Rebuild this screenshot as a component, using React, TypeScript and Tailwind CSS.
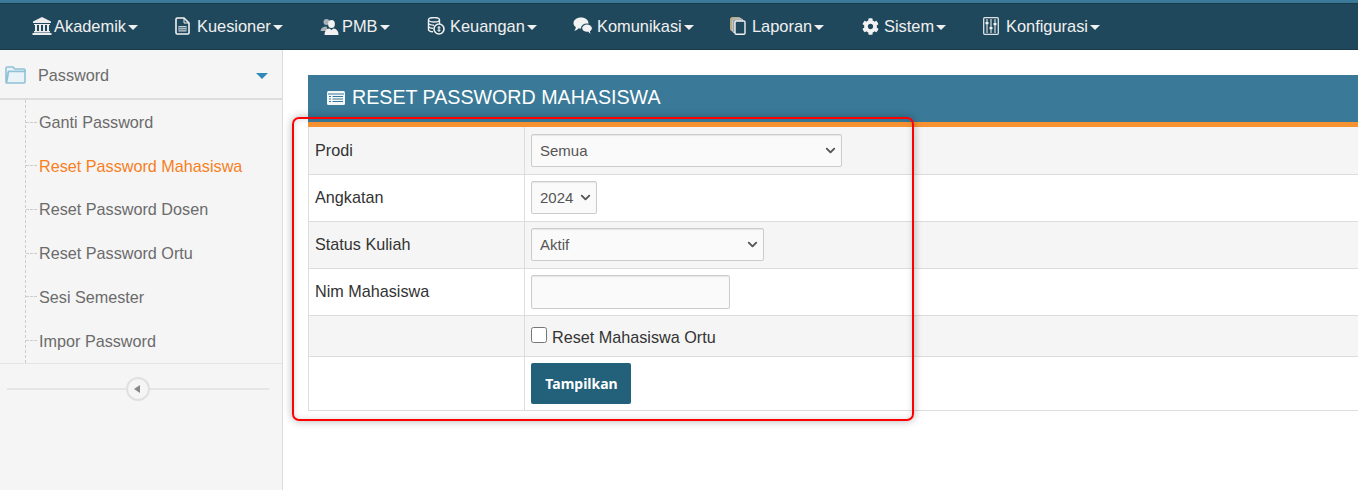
import { ChevronDown } from 'lucide-react';
import { FaCog } from 'react-icons/fa';

function BankIcon() {
  return (
    <svg width="20" height="18" viewBox="0 0 20 18" fill="#ececec">
      <path d="M10 0 L19 4.5 V6 H1 V4.5 Z" />
      <rect x="2" y="7" width="16" height="1" />
      <rect x="3" y="8" width="2" height="6" />
      <rect x="7" y="8" width="2" height="6" />
      <rect x="11" y="8" width="2" height="6" />
      <rect x="15" y="8" width="2" height="6" />
      <rect x="2" y="14" width="16" height="1.5" />
      <rect x="0.5" y="16" width="19" height="2" />
    </svg>
  );
}

function FileIcon() {
  return (
    <svg width="15" height="18" viewBox="0 0 15 18" fill="none">
      <path d="M1 2.2 Q1 1 2.2 1 H9 L14 6 V15.8 Q14 17 12.8 17 H2.2 Q1 17 1 15.8 Z" stroke="#f2f2f2" strokeWidth="1.6" />
      <path d="M9 1 V6 H14" stroke="#f2f2f2" strokeWidth="1" />
      <rect x="3.5" y="9" width="8" height="5.5" fill="#c9d2d8" />
      <path d="M4 10.7 H11 M4 12.8 H11" stroke="#20485c" strokeWidth="0.8" />
    </svg>
  );
}

function UsersIcon() {
  return (
    <svg width="19" height="17" viewBox="0 0 19 17">
      <circle cx="6.5" cy="4" r="3" fill="#a9b3b8" />
      <path d="M0.5 13 Q1 8.5 6.5 8.5 L8 13 Z" fill="#a9b3b8" />
      <ellipse cx="11.5" cy="6" rx="3.4" ry="4" fill="#f2f2f2" />
      <path d="M4.5 17 Q4.5 11 9.5 10.5 L11.5 12 L13.5 10.5 Q18.5 11 18.5 17 Z" fill="#f2f2f2" />
    </svg>
  );
}

function CoinsIcon() {
  return (
    <svg width="18" height="18" viewBox="0 0 18 18" fill="none" stroke="#eef0f1" strokeWidth="1.4">
      <ellipse cx="7" cy="2.8" rx="5.5" ry="2.2" />
      <path d="M1.5 3 V12.5 Q1.5 14.5 6 14.8" />
      <path d="M12.5 3 V7" />
      <path d="M1.5 6.2 Q2 8.2 7 8.2 M1.5 9.4 Q2 11.3 6 11.4" />
      <circle cx="12" cy="12" r="5" fill="#20485c" strokeWidth="1.6" />
      <path d="M12 9 V15 M10.5 10.8 H13.5 M10.5 13.2 H13.5" strokeWidth="1.1" />
    </svg>
  );
}

function CommentsIcon() {
  return (
    <svg width="20" height="18" viewBox="0 0 20 18">
      <path d="M8 0.5 C12.5 0.5 15.5 3 15.5 6 C15.5 9 12.5 11.5 8 11.5 C7 11.5 6.3 11.4 5.6 11.2 C4.5 12.6 3 13.5 1.2 13.6 C2.2 12.6 2.8 11.4 2.8 10 C1.2 9 0.5 7.6 0.5 6 C0.5 3 3.5 0.5 8 0.5 Z" fill="#f2f2f2" />
      <path d="M14 7 C17 7 19.5 8.9 19.5 11.2 C19.5 12.6 18.8 13.7 17.6 14.4 C17.6 15.6 18.1 16.5 19 17.4 C17.4 17.4 16 16.7 15 15.3 C14.7 15.4 14.4 15.4 14 15.4 C11 15.4 8.6 13.5 8.6 11.2 C8.6 8.9 11 7 14 7 Z" fill="#f2f2f2" stroke="#20485c" strokeWidth="1.2" />
    </svg>
  );
}

function CopyIcon() {
  return (
    <svg width="16" height="18" viewBox="0 0 16 18" fill="none">
      <rect x="0.7" y="0.7" width="10" height="13" rx="1.2" fill="#b9a878" stroke="#c9bc94" strokeWidth="1" />
      <rect x="2.7" y="2" width="10" height="13.5" rx="1.2" fill="#8a9aa2" stroke="#c4ccd0" strokeWidth="1" />
      <rect x="5" y="4" width="10" height="13.3" rx="1.2" fill="#20485c" stroke="#f2f2f2" strokeWidth="1.4" />
    </svg>
  );
}

function MixerIcon() {
  return (
    <svg width="16" height="18" viewBox="0 0 16 18" fill="none">
      <rect x="0.7" y="0.7" width="14.6" height="16.6" rx="1" stroke="#dfe3e5" strokeWidth="1.3" />
      <path d="M4 2 V16 M8 2 V16 M12 2 V16" stroke="#e8e8e8" strokeWidth="1.1" />
      <rect x="2.5" y="5" width="3" height="2.2" fill="#f2f2f2" />
      <rect x="6.5" y="10" width="3" height="2.2" fill="#f2f2f2" />
      <rect x="10.5" y="6" width="3" height="2.2" fill="#f2f2f2" />
    </svg>
  );
}

function FolderIcon() {
  return (
    <svg width="21" height="18" viewBox="0 0 21 18" fill="#eaf3f8" stroke="#8fc1d8" strokeWidth="1.6">
      <path d="M1 2.2 Q1 1 2.2 1 H8 L9.8 3 H19 Q20 3 20 4 V5.5 H3.6 L1 16.5 Z" />
      <path d="M3.6 5.5 H20 V16 Q20 17 19 17 H1.5 Z" />
    </svg>
  );
}

function ListCardIcon() {
  return (
    <svg width="18" height="14" viewBox="0 0 18 14">
      <rect x="0" y="0" width="18" height="14" rx="1.5" fill="#f4f7f9" />
      <rect x="1" y="2.5" width="16" height="1" fill="#3a7a98" />
      <path d="M2 5.5 H4 M2 8 H4 M2 10.5 H4 M5.5 5.5 H16 M5.5 8 H16 M5.5 10.5 H16" stroke="#3a7a98" strokeWidth="1.1" />
    </svg>
  );
}

const menus = [
  { label: 'Akademik', icon: <BankIcon />, w: 'w-[143px]', slot: 'w-[22px]' },
  { label: 'Kuesioner', icon: <FileIcon />, w: 'w-[145px]', slot: 'w-[22px]' },
  { label: 'PMB', icon: <UsersIcon />, w: 'w-[107px]', slot: 'w-[22px]' },
  { label: 'Keuangan', icon: <CoinsIcon />, w: 'w-[146px]', slot: 'w-[23px]' },
  { label: 'Komunikasi', icon: <CommentsIcon />, w: 'w-[157px]', slot: 'w-[24px]' },
  { label: 'Laporan', icon: <CopyIcon />, w: 'w-[132px]', slot: 'w-[22px]' },
  { label: 'Sistem', icon: <FaCog size={17} color="#f2f2f2" />, w: 'w-[121px]', slot: 'w-[22px]' },
  { label: 'Konfigurasi', icon: <MixerIcon />, w: 'w-[130px]', slot: 'w-[23px]' },
];

const sideLinks = ['Ganti Password', 'Reset Password Mahasiswa', 'Reset Password Dosen', 'Reset Password Ortu', 'Sesi Semester', 'Impor Password'];

function Caret() {
  return <span className="ml-[2px] mt-[2px] inline-block h-0 w-0 border-x-[5px] border-t-[5px] border-x-transparent border-t-[#f0f0f0]" />;
}

function SelectBox({ value, w }: { value: string; w: string }) {
  return (
    <div className={`flex h-[33px] items-center justify-between rounded-[2px] border border-[#ccc] bg-[#fafafa] pl-[8px] pr-[3px] text-[15px] text-[#555] shadow-[inset_0_1px_1px_rgba(0,0,0,0.08)] ${w}`}>
      <span className="pt-[1px]">{value}</span>
      <ChevronDown size={15} strokeWidth={3} className="text-[#555]" />
    </div>
  );
}

export default function App() {
  return (
    <div className="relative h-[490px] w-[1358px] overflow-hidden bg-white font-['Liberation_Sans',Arial,sans-serif]">
      <div className="h-[3px] bg-[#3a7a98]" />
      <nav className="flex h-[47px] items-center border-y border-[#1a3a4a] bg-[#20485c] pl-[32px] text-[16.4px] text-[#f0f0f0]">
        {menus.map(({ label, icon, w, slot }) => (
          <div key={label} className={`flex shrink-0 items-center ${w}`}>
            <span className={`flex shrink-0 items-center justify-start ${slot}`}>{icon}</span>
            <span>{label}</span>
            <Caret />
          </div>
        ))}
      </nav>
      <div className="flex h-[440px]">
        <aside className="w-[283px] shrink-0 border-r border-[#ddd] bg-[#f5f5f5] text-[16.2px]">
          <div className="flex h-[50px] items-center justify-between border-b-2 border-[#ddd] pl-[5px] pr-[14px] pt-[3px]">
            <div className="flex items-center gap-[12px] text-[#6b6b6b]">
              <FolderIcon />
              <span>Password</span>
            </div>
            <span className="h-0 w-0 border-x-[6px] border-t-[6px] border-x-transparent border-t-[#2f8ab5]" />
          </div>
          <ul className="relative border-b border-[#e5e5e5] pb-[0.6px] pt-[0.4px] text-[#6b6b6b]">
            <span className="absolute bottom-0 left-[25px] top-0 border-l border-dashed border-[#ccc]" />
            {sideLinks.map((l) => (
              <li key={l} className={`flex h-[43.7px] items-center pl-[26px] ${l === 'Reset Password Mahasiswa' ? 'text-[#f77f1e]' : ''}`}>
                <span className="mr-[2px] w-[11px] border-t border-dashed border-[#ccc]" />
                <span>{l}</span>
              </li>
            ))}
          </ul>
          <div className="flex h-[50px] items-center pl-[7px] pr-[13px]">
            <div className="h-[2px] flex-1 bg-[#e5e5e5]" />
            <div className="flex h-[24px] w-[24px] items-center justify-center rounded-full border-2 border-[#e0e0e0] bg-[#f5f5f5]">
              <span className="mr-[2px] h-0 w-0 border-y-[4px] border-r-[6px] border-y-transparent border-r-[#888]" />
            </div>
            <div className="h-[2px] flex-1 bg-[#e5e5e5]" />
          </div>
        </aside>
        <main className="flex-1 pl-[25px] pt-[25px]">
          <div className="flex h-[52px] items-center gap-[7px] border-b-[5px] border-[#f79232] bg-[#3a7a98] pb-[2px] pl-[19px] text-[19.65px] text-white">
            <ListCardIcon />
            <span>RESET PASSWORD MAHASISWA</span>
          </div>
          <div className="border-l border-[#ddd] text-[16.2px] text-[#333]">
            <div className="flex h-[48px] border-b border-[#ddd] bg-[#f5f5f5]">
              <div className="w-[216px] border-r border-[#ddd] pl-[6px] pt-[11px]">Prodi</div>
              <div className="pl-[6px] pt-[7px]"><SelectBox value="Semua" w="w-[311px]" /></div>
            </div>
            <div className="flex h-[47px] border-b border-[#ddd]">
              <div className="w-[216px] border-r border-[#ddd] pl-[6px] pt-[10px]">Angkatan</div>
              <div className="pl-[6px] pt-[6px]"><SelectBox value="2024" w="w-[66px]" /></div>
            </div>
            <div className="flex h-[47px] border-b border-[#ddd] bg-[#f5f5f5]">
              <div className="w-[216px] border-r border-[#ddd] pl-[6px] pt-[10px]">Status Kuliah</div>
              <div className="pl-[6px] pt-[6px]"><SelectBox value="Aktif" w="w-[233px]" /></div>
            </div>
            <div className="flex h-[47px] border-b border-[#ddd]">
              <div className="w-[216px] border-r border-[#ddd] pl-[6px] pt-[10px]">Nim Mahasiswa</div>
              <div className="pl-[6px] pt-[6px]"><input className="h-[34px] w-[199px] rounded-[2px] border border-[#ccc] bg-[#fafafa] shadow-[inset_0_1px_1px_rgba(0,0,0,0.08)]" /></div>
            </div>
            <div className="flex h-[41px] border-b border-[#ddd] bg-[#f5f5f5]">
              <div className="w-[216px] border-r border-[#ddd]" />
              <label className="flex items-center gap-[5px] pl-[6px]">
                <input type="checkbox" className="mb-[2px] h-[16px] w-[16px]" />
                <span className="mt-[2px]">Reset Mahasiswa Ortu</span>
              </label>
            </div>
            <div className="flex h-[54px] border-b border-[#ddd]">
              <div className="w-[216px] border-r border-[#ddd]" />
              <div className="pl-[6px] pt-[6px]">
                <button className="h-[41px] w-[100px] rounded-[2px] bg-[#23607a] pl-[1px] font-['Noto_Sans',sans-serif] text-[14px] font-bold text-white">Tampilkan</button>
              </div>
            </div>
          </div>
        </main>
      </div>
      <div className="pointer-events-none absolute left-[292px] top-[117px] h-[304px] w-[622px] rounded-[7px] border-2 border-[#f00] shadow-[0_0_8px_rgba(0,0,0,0.3),inset_0_0_6px_rgba(0,0,0,0.15)]" />
    </div>
  );
}
